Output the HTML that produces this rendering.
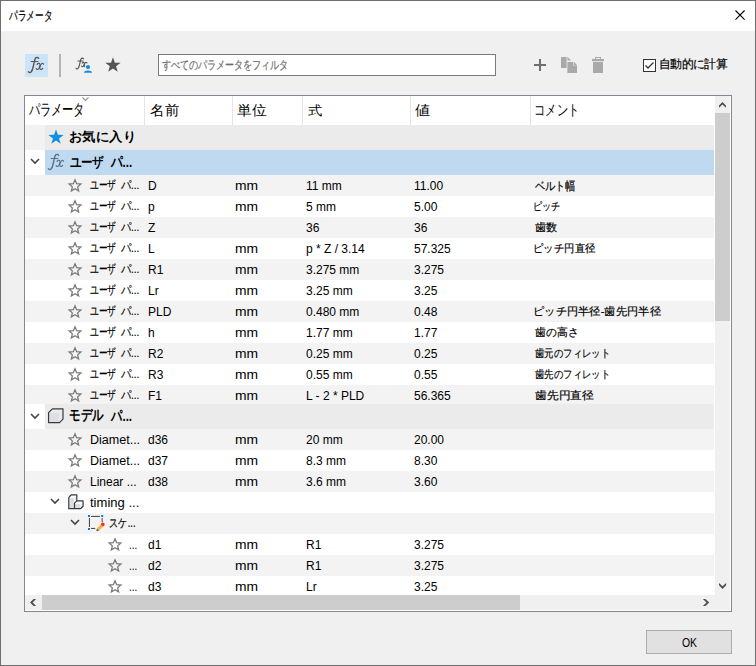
<!DOCTYPE html>
<html><head><meta charset="utf-8"><style>
*{box-sizing:border-box;margin:0;padding:0}
html,body{width:756px;height:666px;overflow:hidden;background:#f0f0f0}
body{position:relative;font-family:"Liberation Sans",sans-serif;color:#000;font-size:12px}
.a{position:absolute;white-space:nowrap}
.f{transform-origin:0 0}
.fxs path{stroke-width:1.65px}
#win{position:absolute;left:0;top:0;width:756px;height:666px;border:1px solid #6e6e6e;background:#f0f0f0}
#title{position:absolute;left:1px;top:1px;width:754px;height:30px;background:#fff}
#tbl{position:absolute;left:24px;top:95px;width:708px;height:517px;border:1px solid #828790;background:#fff;overflow:hidden}
.r{position:absolute;left:0;width:689px;height:21px;background:#fff}
.g{background:#f3f3f3}
.dv{position:absolute;top:0;width:1px;height:29px;background:#e5e5e5}
</style></head><body>
<div id="win"></div><div id="title"></div>
<div class="a f" style="left:9.10px;top:6.55px;font-size:12px;line-height:16px;transform:scale(0.7241,1.0818);-webkit-text-stroke-width:0.2px">パラメータ</div>
<svg class="a" style="left:732px;top:7px" width="16" height="16" viewBox="732 7 16 16"><path d="M735.5 10.5L744.6 19.6M744.6 10.5L735.5 19.6" stroke="#000" stroke-width="1.1"/></svg>
<div class="a" style="left:25px;top:54px;width:23px;height:23px;background:#cce4f7"></div>
<svg class="a" style="left:24px;top:53px" width="24.00" height="24.00" viewBox="0 0 24 24"><g fill="none" stroke="#555" stroke-linecap="round"><path d="M14.7 5.4 C14.3 4.3 12.6 3.9 11.6 5.0 C10.6 6.2 10.2 9.5 9.5 12.5 C8.9 15.3 8.3 17.6 7.2 18.8 C6.4 19.8 5.0 19.8 4.3 18.7" stroke-width="1.35"/><path d="M7.1 8.5 H13.9" stroke-width="1.1"/><path d="M13.1 11.4 C13.6 10.4 14.8 10.0 15.6 10.5 C16.2 10.9 16.0 12.5 15.6 14.0 C15.2 15.5 14.6 16.4 13.7 16.5 C13.0 16.6 12.4 16.2 12.2 15.5" stroke-width="1.15"/><path d="M19.6 11.2 C19.4 10.5 18.6 10.2 17.9 10.5 C17.0 10.9 16.3 12.3 16.0 13.6 C15.6 15.2 15.9 16.4 16.8 16.5 C17.6 16.6 18.3 16.0 18.7 15.4" stroke-width="1.15"/></g></svg>
<div class="a" style="left:59px;top:54px;width:2px;height:23px;background:#b4b4b4"></div>
<svg class="a fxs" style="left:73.25px;top:54.5px" width="17.04" height="17.04" viewBox="0 0 24 24"><g fill="none" stroke="#555" stroke-linecap="round"><path d="M14.7 5.4 C14.3 4.3 12.6 3.9 11.6 5.0 C10.6 6.2 10.2 9.5 9.5 12.5 C8.9 15.3 8.3 17.6 7.2 18.8 C6.4 19.8 5.0 19.8 4.3 18.7" stroke-width="1.35"/><path d="M7.1 8.5 H13.9" stroke-width="1.1"/><path d="M13.1 11.4 C13.6 10.4 14.8 10.0 15.6 10.5 C16.2 10.9 16.0 12.5 15.6 14.0 C15.2 15.5 14.6 16.4 13.7 16.5 C13.0 16.6 12.4 16.2 12.2 15.5" stroke-width="1.15"/><path d="M19.6 11.2 C19.4 10.5 18.6 10.2 17.9 10.5 C17.0 10.9 16.3 12.3 16.0 13.6 C15.6 15.2 15.9 16.4 16.8 16.5 C17.6 16.6 18.3 16.0 18.7 15.4" stroke-width="1.15"/></g></svg>
<svg class="a" style="left:82px;top:63px" width="12" height="12" viewBox="82 63 12 12"><circle cx="88" cy="67.1" r="2.9" fill="#f0f0f0"/><path d="M83 73.6 C83 68.6 93 68.6 93 73.6Z" fill="#f0f0f0"/><circle cx="88" cy="67.1" r="2.1" fill="#1a88e0"/><path d="M83.9 72.8 C83.9 69.6 92.1 69.6 92.1 72.8Z" fill="#1a88e0"/></svg>
<svg class="a" style="left:100px;top:52px" width="26" height="26" viewBox="100 52 26 26"><path d="M112.95 57.20L114.85 62.68L120.65 62.80L116.03 66.30L117.71 71.85L112.95 68.54L108.19 71.85L109.87 66.30L105.25 62.80L111.05 62.68Z" fill="#555"/></svg>
<div class="a" style="left:158px;top:54px;width:338px;height:22px;background:#fff;border:1px solid #7a7a7a"></div>
<div class="a f" style="left:161.90px;top:57.13px;font-size:12px;line-height:16px;transform:scale(0.7506,0.9909);color:#6d6d6d;-webkit-text-stroke-width:0.2px">すべてのパラメータをフィルタ</div>
<div class="a" style="left:534px;top:64px;width:12px;height:2px;background:#6e6e6e"></div>
<div class="a" style="left:539px;top:59px;width:2px;height:12px;background:#6e6e6e"></div>
<svg class="a" style="left:558px;top:54px" width="50" height="22" viewBox="558 54 50 22"><g fill="#a9a9a9"><path d="M561 57H566.6V68H561Z"/><path d="M567.4 56.8L571.2 60.6H567.4Z"/><path d="M567.4 62H573.2V65.6H577V73H567.4Z"/><path d="M573.8 61.8L577.2 65.2H573.8Z"/><path d="M595 57H601V59.2H600V58H596V59.2H595Z"/><path d="M592 59H604V61.2H592Z"/><path d="M593 62H603V73H593Z"/></g></svg>
<div class="a" style="left:643px;top:59px;width:13px;height:13px;border:1px solid #333;background:#fff"></div>
<svg class="a" style="left:643px;top:59px" width="13" height="13" viewBox="0 0 13 13"><path d="M2.5 6.5L5 9L10.5 3.5" stroke="#333" stroke-width="1.3" fill="none"/></svg>
<div class="a f" style="left:658.86px;top:57.48px;font-size:12px;line-height:16px;transform:scale(0.9437,0.9583);-webkit-text-stroke-width:0.2px">自動的に計算</div>
<div id="tbl">
<div class="a" style="left:0;top:0;width:690px;height:29px;background:#fff"></div>
<div class="dv" style="left:119px"></div>
<div class="dv" style="left:207px"></div>
<div class="dv" style="left:277px"></div>
<div class="dv" style="left:385px"></div>
<div class="dv" style="left:505px"></div>
<div class="a f" style="left:4.27px;top:-2.02px;font-size:15px;line-height:29px;transform:scale(0.7338,1.0462);">パラメータ</div>
<div class="a f" style="left:124.53px;top:0.26px;font-size:15px;line-height:29px;transform:scale(0.9714,0.9429);">名前</div>
<div class="a f" style="left:211.90px;top:0.26px;font-size:15px;line-height:29px;transform:scale(0.9964,0.9429);">単位</div>
<div class="a f" style="left:282.90px;top:0.77px;font-size:15px;line-height:29px;transform:scale(0.9667,0.8786);">式</div>
<div class="a f" style="left:390.10px;top:-0.33px;font-size:15px;line-height:29px;transform:scale(0.9929,0.9286);">値</div>
<div class="a f" style="left:509.49px;top:-1.00px;font-size:15px;line-height:29px;transform:scale(0.7537,1.0000);">コメント</div>
<svg class="a" style="left:55px;top:0px" width="12" height="8" viewBox="80 96 12 8"><path d="M82.3 97.4L85.4 100.4L88.5 97.4" stroke="#909090" stroke-width="1.15" fill="none"/></svg>
<div class="r" style="top:29px;height:25px;background:#f2f2f2"></div>
<div class="r" style="top:29px;left:20px;width:669px;height:25px;background:#ebebeb"></div>
<svg class="a" style="left:20px;top:31px" width="22" height="22" viewBox="45 127 22 22"><path d="M56.00 129.40L57.88 134.81L63.61 134.93L59.04 138.39L60.70 143.87L56.00 140.60L51.30 143.87L52.96 138.39L48.39 134.93L54.12 134.81Z" fill="#1190de"/></svg>
<div class="a f" style="left:44.44px;top:29.32px;font-size:14px;line-height:25px;transform:scale(0.9561,0.9357);font-weight:bold">お気に入り</div>
<div class="r" style="top:54px;height:25px;background:#fff"></div>
<div class="r" style="top:54px;left:20px;width:669px;height:25px;background:#bfd9f0"></div>
<svg class="a" style="left:5px;top:62px" width="10" height="7" viewBox="0 0 10 7"><path d="M1 1L5 5L9 1" stroke="#444" stroke-width="1.6" fill="none"/></svg>
<svg class="a" style="left:19px;top:54px" width="24.00" height="24.00" viewBox="0 0 24 24"><g fill="none" stroke="#587089" stroke-linecap="round"><path d="M14.7 5.4 C14.3 4.3 12.6 3.9 11.6 5.0 C10.6 6.2 10.2 9.5 9.5 12.5 C8.9 15.3 8.3 17.6 7.2 18.8 C6.4 19.8 5.0 19.8 4.3 18.7" stroke-width="1.35"/><path d="M7.1 8.5 H13.9" stroke-width="1.1"/><path d="M13.1 11.4 C13.6 10.4 14.8 10.0 15.6 10.5 C16.2 10.9 16.0 12.5 15.6 14.0 C15.2 15.5 14.6 16.4 13.7 16.5 C13.0 16.6 12.4 16.2 12.2 15.5" stroke-width="1.15"/><path d="M19.6 11.2 C19.4 10.5 18.6 10.2 17.9 10.5 C17.0 10.9 16.3 12.3 16.0 13.6 C15.6 15.2 15.9 16.4 16.8 16.5 C17.6 16.6 18.3 16.0 18.7 15.4" stroke-width="1.15"/></g></svg>
<div class="a f" style="left:45.40px;top:54.11px;font-size:14px;line-height:25px;transform:scale(0.8012,0.9731);font-weight:bold">ユーザ</div>
<div class="a f" style="left:85.50px;top:52.58px;font-size:14px;line-height:25px;transform:scale(0.8240,1.0538);font-weight:bold">パ...</div>
<div class="r g" style="top:79px;height:21px"></div>
<svg class="a" style="left:41px;top:80.6px" width="18" height="18" viewBox="66 176.6 18 18"><path d="M75.00 179.40L76.64 183.34L80.90 183.68L77.65 186.46L78.64 190.62L75.00 188.39L71.36 190.62L72.35 186.46L69.10 183.68L73.36 183.34Z" fill="none" stroke="#777" stroke-width="1.25" stroke-linejoin="miter"/></svg>
<div class="a f" style="left:65.40px;top:81.19px;font-size:12px;line-height:16px;transform:scale(0.7278,1.0042);-webkit-text-stroke-width:0.2px">ユーザ</div>
<div class="a f" style="left:95.90px;top:81.25px;font-size:12px;line-height:16px;transform:scale(0.8333,0.9750);-webkit-text-stroke-width:0.2px">パ...</div>
<div class="a" style="left:123px;top:82px;font-size:12px;line-height:16px;">D</div>
<div class="a f" style="left:210.14px;top:82.00px;font-size:12px;line-height:16px;transform:scale(1.1556,1.0000);">mm</div>
<div class="a" style="left:281px;top:82px;font-size:12px;line-height:16px;">11 mm</div>
<div class="a" style="left:389px;top:82px;font-size:12px;line-height:16px;">11.00</div>
<div class="a f" style="left:509.50px;top:81.63px;font-size:12px;line-height:16px;transform:scale(0.8404,0.9833);-webkit-text-stroke-width:0.2px">ベルト幅</div>
<div class="r" style="top:100px;height:21px"></div>
<svg class="a" style="left:41px;top:101.6px" width="18" height="18" viewBox="66 197.6 18 18"><path d="M75.00 200.40L76.64 204.34L80.90 204.68L77.65 207.46L78.64 211.62L75.00 209.39L71.36 211.62L72.35 207.46L69.10 204.68L73.36 204.34Z" fill="none" stroke="#777" stroke-width="1.25" stroke-linejoin="miter"/></svg>
<div class="a f" style="left:65.40px;top:102.19px;font-size:12px;line-height:16px;transform:scale(0.7278,1.0042);-webkit-text-stroke-width:0.2px">ユーザ</div>
<div class="a f" style="left:95.90px;top:102.25px;font-size:12px;line-height:16px;transform:scale(0.8333,0.9750);-webkit-text-stroke-width:0.2px">パ...</div>
<div class="a" style="left:123px;top:103px;font-size:12px;line-height:16px;">p</div>
<div class="a f" style="left:210.14px;top:103.00px;font-size:12px;line-height:16px;transform:scale(1.1556,1.0000);">mm</div>
<div class="a" style="left:281px;top:103px;font-size:12px;line-height:16px;">5 mm</div>
<div class="a" style="left:389px;top:103px;font-size:12px;line-height:16px;">5.00</div>
<div class="a f" style="left:507.97px;top:102.75px;font-size:12px;line-height:16px;transform:scale(0.7636,0.9250);-webkit-text-stroke-width:0.2px">ピッチ</div>
<div class="r g" style="top:121px;height:21px"></div>
<svg class="a" style="left:41px;top:122.6px" width="18" height="18" viewBox="66 218.6 18 18"><path d="M75.00 221.40L76.64 225.34L80.90 225.68L77.65 228.46L78.64 232.62L75.00 230.39L71.36 232.62L72.35 228.46L69.10 225.68L73.36 225.34Z" fill="none" stroke="#777" stroke-width="1.25" stroke-linejoin="miter"/></svg>
<div class="a f" style="left:65.40px;top:123.19px;font-size:12px;line-height:16px;transform:scale(0.7278,1.0042);-webkit-text-stroke-width:0.2px">ユーザ</div>
<div class="a f" style="left:95.90px;top:123.25px;font-size:12px;line-height:16px;transform:scale(0.8333,0.9750);-webkit-text-stroke-width:0.2px">パ...</div>
<div class="a" style="left:123px;top:124px;font-size:12px;line-height:16px;">Z</div>
<div class="a" style="left:281px;top:124px;font-size:12px;line-height:16px;">36</div>
<div class="a" style="left:389px;top:124px;font-size:12px;line-height:16px;">36</div>
<div class="a f" style="left:509.50px;top:123.75px;font-size:12px;line-height:16px;transform:scale(0.9375,0.9250);-webkit-text-stroke-width:0.2px">歯数</div>
<div class="r" style="top:142px;height:21px"></div>
<svg class="a" style="left:41px;top:143.6px" width="18" height="18" viewBox="66 239.6 18 18"><path d="M75.00 242.40L76.64 246.34L80.90 246.68L77.65 249.46L78.64 253.62L75.00 251.39L71.36 253.62L72.35 249.46L69.10 246.68L73.36 246.34Z" fill="none" stroke="#777" stroke-width="1.25" stroke-linejoin="miter"/></svg>
<div class="a f" style="left:65.40px;top:144.19px;font-size:12px;line-height:16px;transform:scale(0.7278,1.0042);-webkit-text-stroke-width:0.2px">ユーザ</div>
<div class="a f" style="left:95.90px;top:144.25px;font-size:12px;line-height:16px;transform:scale(0.8333,0.9750);-webkit-text-stroke-width:0.2px">パ...</div>
<div class="a" style="left:123px;top:145px;font-size:12px;line-height:16px;">L</div>
<div class="a f" style="left:210.14px;top:145.00px;font-size:12px;line-height:16px;transform:scale(1.1556,1.0000);">mm</div>
<div class="a" style="left:281px;top:145px;font-size:12px;line-height:16px;">p * Z / 3.14</div>
<div class="a" style="left:389px;top:145px;font-size:12px;line-height:16px;">57.325</div>
<div class="a f" style="left:507.76px;top:144.75px;font-size:12px;line-height:16px;transform:scale(0.8700,0.9250);-webkit-text-stroke-width:0.2px">ピッチ円直径</div>
<div class="r g" style="top:163px;height:21px"></div>
<svg class="a" style="left:41px;top:164.60000000000002px" width="18" height="18" viewBox="66 260.6 18 18"><path d="M75.00 263.40L76.64 267.34L80.90 267.68L77.65 270.46L78.64 274.62L75.00 272.39L71.36 274.62L72.35 270.46L69.10 267.68L73.36 267.34Z" fill="none" stroke="#777" stroke-width="1.25" stroke-linejoin="miter"/></svg>
<div class="a f" style="left:65.40px;top:165.19px;font-size:12px;line-height:16px;transform:scale(0.7278,1.0042);-webkit-text-stroke-width:0.2px">ユーザ</div>
<div class="a f" style="left:95.90px;top:165.25px;font-size:12px;line-height:16px;transform:scale(0.8333,0.9750);-webkit-text-stroke-width:0.2px">パ...</div>
<div class="a" style="left:123px;top:166px;font-size:12px;line-height:16px;">R1</div>
<div class="a f" style="left:210.14px;top:166.00px;font-size:12px;line-height:16px;transform:scale(1.1556,1.0000);">mm</div>
<div class="a" style="left:281px;top:166px;font-size:12px;line-height:16px;">3.275 mm</div>
<div class="a" style="left:389px;top:166px;font-size:12px;line-height:16px;">3.275</div>
<div class="r" style="top:184px;height:21px"></div>
<svg class="a" style="left:41px;top:185.60000000000002px" width="18" height="18" viewBox="66 281.6 18 18"><path d="M75.00 284.40L76.64 288.34L80.90 288.68L77.65 291.46L78.64 295.62L75.00 293.39L71.36 295.62L72.35 291.46L69.10 288.68L73.36 288.34Z" fill="none" stroke="#777" stroke-width="1.25" stroke-linejoin="miter"/></svg>
<div class="a f" style="left:65.40px;top:186.19px;font-size:12px;line-height:16px;transform:scale(0.7278,1.0042);-webkit-text-stroke-width:0.2px">ユーザ</div>
<div class="a f" style="left:95.90px;top:186.25px;font-size:12px;line-height:16px;transform:scale(0.8333,0.9750);-webkit-text-stroke-width:0.2px">パ...</div>
<div class="a" style="left:123px;top:187px;font-size:12px;line-height:16px;">Lr</div>
<div class="a f" style="left:210.14px;top:187.00px;font-size:12px;line-height:16px;transform:scale(1.1556,1.0000);">mm</div>
<div class="a" style="left:281px;top:187px;font-size:12px;line-height:16px;">3.25 mm</div>
<div class="a" style="left:389px;top:187px;font-size:12px;line-height:16px;">3.25</div>
<div class="r g" style="top:205px;height:21px"></div>
<svg class="a" style="left:41px;top:206.60000000000002px" width="18" height="18" viewBox="66 302.6 18 18"><path d="M75.00 305.40L76.64 309.34L80.90 309.68L77.65 312.46L78.64 316.62L75.00 314.39L71.36 316.62L72.35 312.46L69.10 309.68L73.36 309.34Z" fill="none" stroke="#777" stroke-width="1.25" stroke-linejoin="miter"/></svg>
<div class="a f" style="left:65.40px;top:207.19px;font-size:12px;line-height:16px;transform:scale(0.7278,1.0042);-webkit-text-stroke-width:0.2px">ユーザ</div>
<div class="a f" style="left:95.90px;top:207.25px;font-size:12px;line-height:16px;transform:scale(0.8333,0.9750);-webkit-text-stroke-width:0.2px">パ...</div>
<div class="a" style="left:123px;top:208px;font-size:12px;line-height:16px;">PLD</div>
<div class="a f" style="left:210.14px;top:208.00px;font-size:12px;line-height:16px;transform:scale(1.1556,1.0000);">mm</div>
<div class="a" style="left:281px;top:208px;font-size:12px;line-height:16px;">0.480 mm</div>
<div class="a" style="left:389px;top:208px;font-size:12px;line-height:16px;">0.48</div>
<div class="a f" style="left:507.62px;top:207.75px;font-size:12px;line-height:16px;transform:scale(0.9403,0.9250);-webkit-text-stroke-width:0.2px">ピッチ円半径-歯先円半径</div>
<div class="r" style="top:226px;height:21px"></div>
<svg class="a" style="left:41px;top:227.60000000000002px" width="18" height="18" viewBox="66 323.6 18 18"><path d="M75.00 326.40L76.64 330.34L80.90 330.68L77.65 333.46L78.64 337.62L75.00 335.39L71.36 337.62L72.35 333.46L69.10 330.68L73.36 330.34Z" fill="none" stroke="#777" stroke-width="1.25" stroke-linejoin="miter"/></svg>
<div class="a f" style="left:65.40px;top:228.19px;font-size:12px;line-height:16px;transform:scale(0.7278,1.0042);-webkit-text-stroke-width:0.2px">ユーザ</div>
<div class="a f" style="left:95.90px;top:228.25px;font-size:12px;line-height:16px;transform:scale(0.8333,0.9750);-webkit-text-stroke-width:0.2px">パ...</div>
<div class="a" style="left:123px;top:229px;font-size:12px;line-height:16px;">h</div>
<div class="a f" style="left:210.14px;top:229.00px;font-size:12px;line-height:16px;transform:scale(1.1556,1.0000);">mm</div>
<div class="a" style="left:281px;top:229px;font-size:12px;line-height:16px;">1.77 mm</div>
<div class="a" style="left:389px;top:229px;font-size:12px;line-height:16px;">1.77</div>
<div class="a f" style="left:509.50px;top:228.75px;font-size:12px;line-height:16px;transform:scale(0.9065,0.9250);-webkit-text-stroke-width:0.2px">歯の高さ</div>
<div class="r g" style="top:247px;height:21px"></div>
<svg class="a" style="left:41px;top:248.60000000000002px" width="18" height="18" viewBox="66 344.6 18 18"><path d="M75.00 347.40L76.64 351.34L80.90 351.68L77.65 354.46L78.64 358.62L75.00 356.39L71.36 358.62L72.35 354.46L69.10 351.68L73.36 351.34Z" fill="none" stroke="#777" stroke-width="1.25" stroke-linejoin="miter"/></svg>
<div class="a f" style="left:65.40px;top:249.19px;font-size:12px;line-height:16px;transform:scale(0.7278,1.0042);-webkit-text-stroke-width:0.2px">ユーザ</div>
<div class="a f" style="left:95.90px;top:249.25px;font-size:12px;line-height:16px;transform:scale(0.8333,0.9750);-webkit-text-stroke-width:0.2px">パ...</div>
<div class="a" style="left:123px;top:250px;font-size:12px;line-height:16px;">R2</div>
<div class="a f" style="left:210.14px;top:250.00px;font-size:12px;line-height:16px;transform:scale(1.1556,1.0000);">mm</div>
<div class="a" style="left:281px;top:250px;font-size:12px;line-height:16px;">0.25 mm</div>
<div class="a" style="left:389px;top:250px;font-size:12px;line-height:16px;">0.25</div>
<div class="a f" style="left:509.50px;top:249.75px;font-size:12px;line-height:16px;transform:scale(0.7828,0.9250);-webkit-text-stroke-width:0.2px">歯元のフィレット</div>
<div class="r" style="top:268px;height:21px"></div>
<svg class="a" style="left:41px;top:269.6px" width="18" height="18" viewBox="66 365.6 18 18"><path d="M75.00 368.40L76.64 372.34L80.90 372.68L77.65 375.46L78.64 379.62L75.00 377.39L71.36 379.62L72.35 375.46L69.10 372.68L73.36 372.34Z" fill="none" stroke="#777" stroke-width="1.25" stroke-linejoin="miter"/></svg>
<div class="a f" style="left:65.40px;top:270.19px;font-size:12px;line-height:16px;transform:scale(0.7278,1.0042);-webkit-text-stroke-width:0.2px">ユーザ</div>
<div class="a f" style="left:95.90px;top:270.25px;font-size:12px;line-height:16px;transform:scale(0.8333,0.9750);-webkit-text-stroke-width:0.2px">パ...</div>
<div class="a" style="left:123px;top:271px;font-size:12px;line-height:16px;">R3</div>
<div class="a f" style="left:210.14px;top:271.00px;font-size:12px;line-height:16px;transform:scale(1.1556,1.0000);">mm</div>
<div class="a" style="left:281px;top:271px;font-size:12px;line-height:16px;">0.55 mm</div>
<div class="a" style="left:389px;top:271px;font-size:12px;line-height:16px;">0.55</div>
<div class="a f" style="left:509.50px;top:270.75px;font-size:12px;line-height:16px;transform:scale(0.7828,0.9250);-webkit-text-stroke-width:0.2px">歯先のフィレット</div>
<div class="r g" style="top:289px;height:19px"></div>
<svg class="a" style="left:41px;top:290.6px" width="18" height="18" viewBox="66 386.6 18 18"><path d="M75.00 389.40L76.64 393.34L80.90 393.68L77.65 396.46L78.64 400.62L75.00 398.39L71.36 400.62L72.35 396.46L69.10 393.68L73.36 393.34Z" fill="none" stroke="#777" stroke-width="1.25" stroke-linejoin="miter"/></svg>
<div class="a f" style="left:65.40px;top:291.19px;font-size:12px;line-height:16px;transform:scale(0.7278,1.0042);-webkit-text-stroke-width:0.2px">ユーザ</div>
<div class="a f" style="left:95.90px;top:291.25px;font-size:12px;line-height:16px;transform:scale(0.8333,0.9750);-webkit-text-stroke-width:0.2px">パ...</div>
<div class="a" style="left:123px;top:292px;font-size:12px;line-height:16px;">F1</div>
<div class="a f" style="left:210.14px;top:292.00px;font-size:12px;line-height:16px;transform:scale(1.1556,1.0000);">mm</div>
<div class="a" style="left:281px;top:292px;font-size:12px;line-height:16px;">L - 2 * PLD</div>
<div class="a" style="left:389px;top:292px;font-size:12px;line-height:16px;">56.365</div>
<div class="a f" style="left:509.50px;top:291.75px;font-size:12px;line-height:16px;transform:scale(0.9833,0.9250);-webkit-text-stroke-width:0.2px">歯先円直径</div>
<div class="r" style="top:308px;height:25px;background:#fff"></div>
<div class="r" style="top:308px;left:20px;width:669px;height:25px;background:#ebebeb"></div>
<svg class="a" style="left:5px;top:317px" width="10" height="7" viewBox="0 0 10 7"><path d="M1 1L5 5L9 1" stroke="#444" stroke-width="1.6" fill="none"/></svg>
<svg class="a" style="left:21px;top:310px" width="20" height="20" viewBox="46 406 20 20"><path d="M49.8 413H58.8V422H49.8Z" fill="#dcdfe5"/><path d="M59.6 413L62.4 410.2V418.8L59.6 421.6Z" fill="#e6e8ec"/><path d="M48.6 412.6L52.4 408.8H63.0V419.1L59.5 422.6H48.6Z" fill="none" stroke="#3a3a3a" stroke-width="1.2" stroke-linejoin="round"/></svg>
<div class="a f" style="left:44.11px;top:305.25px;font-size:14px;line-height:25px;transform:scale(0.8378,1.1000);font-weight:bold">モデル</div>
<div class="a f" style="left:85.90px;top:305.60px;font-size:14px;line-height:25px;transform:scale(0.8200,1.1000);font-weight:bold">パ...</div>
<div class="r g" style="top:333px;height:21px"></div>
<svg class="a" style="left:41px;top:334.6px" width="18" height="18" viewBox="66 430.6 18 18"><path d="M75.00 433.40L76.64 437.34L80.90 437.68L77.65 440.46L78.64 444.62L75.00 442.39L71.36 444.62L72.35 440.46L69.10 437.68L73.36 437.34Z" fill="none" stroke="#777" stroke-width="1.25" stroke-linejoin="miter"/></svg>
<div class="a f" style="left:64.96px;top:336.00px;font-size:12px;line-height:16px;transform:scale(1.0435,1.0000);">Diamet...</div>
<div class="a" style="left:123px;top:336px;font-size:12px;line-height:16px;">d36</div>
<div class="a f" style="left:210.14px;top:336.00px;font-size:12px;line-height:16px;transform:scale(1.1556,1.0000);">mm</div>
<div class="a" style="left:281px;top:336px;font-size:12px;line-height:16px;">20 mm</div>
<div class="a" style="left:389px;top:336px;font-size:12px;line-height:16px;">20.00</div>
<div class="r" style="top:354px;height:21px"></div>
<svg class="a" style="left:41px;top:355.6px" width="18" height="18" viewBox="66 451.6 18 18"><path d="M75.00 454.40L76.64 458.34L80.90 458.68L77.65 461.46L78.64 465.62L75.00 463.39L71.36 465.62L72.35 461.46L69.10 458.68L73.36 458.34Z" fill="none" stroke="#777" stroke-width="1.25" stroke-linejoin="miter"/></svg>
<div class="a f" style="left:64.96px;top:357.00px;font-size:12px;line-height:16px;transform:scale(1.0435,1.0000);">Diamet...</div>
<div class="a" style="left:123px;top:357px;font-size:12px;line-height:16px;">d37</div>
<div class="a f" style="left:210.14px;top:357.00px;font-size:12px;line-height:16px;transform:scale(1.1556,1.0000);">mm</div>
<div class="a" style="left:281px;top:357px;font-size:12px;line-height:16px;">8.3 mm</div>
<div class="a" style="left:389px;top:357px;font-size:12px;line-height:16px;">8.30</div>
<div class="r g" style="top:375px;height:21px"></div>
<svg class="a" style="left:41px;top:376.6px" width="18" height="18" viewBox="66 472.6 18 18"><path d="M75.00 475.40L76.64 479.34L80.90 479.68L77.65 482.46L78.64 486.62L75.00 484.39L71.36 486.62L72.35 482.46L69.10 479.68L73.36 479.34Z" fill="none" stroke="#777" stroke-width="1.25" stroke-linejoin="miter"/></svg>
<div class="a f" style="left:65.00px;top:378.00px;font-size:12px;line-height:16px;transform:scale(1.0000,1.0000);">Linear ...</div>
<div class="a" style="left:123px;top:378px;font-size:12px;line-height:16px;">d38</div>
<div class="a f" style="left:210.14px;top:378.00px;font-size:12px;line-height:16px;transform:scale(1.1556,1.0000);">mm</div>
<div class="a" style="left:281px;top:378px;font-size:12px;line-height:16px;">3.6 mm</div>
<div class="a" style="left:389px;top:378px;font-size:12px;line-height:16px;">3.60</div>
<div class="r" style="top:396px"></div>
<svg class="a" style="left:25px;top:402px" width="10" height="7" viewBox="0 0 10 7"><path d="M1 1L5 5L9 1" stroke="#444" stroke-width="1.6" fill="none"/></svg>
<svg class="a" style="left:41px;top:396px" width="20" height="20" viewBox="66 492 20 20"><g fill="#dcdfe5"><path d="M69.4 497.8H74.0V508.6H69.4Z"/><path d="M74.9 503.8H80.4V508.6H74.9Z"/></g><g fill="#e8eaee"><path d="M74.8 497.6L76.4 496V500.4L74.8 502Z"/><path d="M80.9 503.6L82.6 501.9V505.9L80.9 507.6Z"/></g><path d="M68.8 497.4L71.5 494.8H76.8V500.9H83.1V506.2L80.5 508.7H68.8Z M76.8 500.9L74.5 503.2V508.7" fill="none" stroke="#3a3a3a" stroke-width="1.2" stroke-linejoin="round"/></svg>
<div class="a f" style="left:65.20px;top:399.00px;font-size:12px;line-height:16px;transform:scale(1.0864,1.0000);">timing ...</div>
<div class="r g" style="top:417px"></div>
<svg class="a" style="left:45px;top:423px" width="10" height="7" viewBox="0 0 10 7"><path d="M1 1L5 5L9 1" stroke="#444" stroke-width="1.6" fill="none"/></svg>
<svg class="a" style="left:60px;top:416px" width="22" height="22" viewBox="85 512 22 22"><g fill="#0a78e0"><rect x="88" y="515" width="2" height="2"/><rect x="101.2" y="515" width="2" height="2"/><rect x="88" y="528" width="2" height="2"/></g><g fill="#505050"><rect x="91" y="515.9" width="9" height="1.1"/><rect x="88.9" y="518" width="1.1" height="9"/><rect x="101.6" y="518" width="1.1" height="4.2"/><rect x="91" y="527.9" width="4.2" height="1.1"/><path d="M96.3 531.2L97.1 528.4L99.2 530.4Z"/></g><path d="M97.0 528.3L99.3 530.5L103.0 526.8L100.7 524.6Z" fill="#f7b538"/><path d="M100.7 524.6L103.0 526.8L104.2 525.6C104.9 524.9 104.9 523.9 104.2 523.2L103.9 522.9C103.2 522.2 102.2 522.2 101.5 522.9Z" fill="#ee3030"/></svg>
<div class="a f" style="left:84.42px;top:419.48px;font-size:12px;line-height:16px;transform:scale(0.7812,1.0400);-webkit-text-stroke-width:0.2px">スケ...</div>
<div class="r" style="top:438px;height:21px"></div>
<svg class="a" style="left:81px;top:439.6px" width="18" height="18" viewBox="106 535.6 18 18"><path d="M115.00 538.40L116.64 542.34L120.90 542.68L117.65 545.46L118.64 549.62L115.00 547.39L111.36 549.62L112.35 545.46L109.10 542.68L113.36 542.34Z" fill="none" stroke="#777" stroke-width="1.25" stroke-linejoin="miter"/></svg>
<div class="a f" style="left:104.19px;top:441.00px;font-size:12px;line-height:16px;transform:scale(0.8125,1.0000);">...</div>
<div class="a" style="left:123px;top:441px;font-size:12px;line-height:16px;">d1</div>
<div class="a f" style="left:210.14px;top:441.00px;font-size:12px;line-height:16px;transform:scale(1.1556,1.0000);">mm</div>
<div class="a" style="left:281px;top:441px;font-size:12px;line-height:16px;">R1</div>
<div class="a" style="left:389px;top:441px;font-size:12px;line-height:16px;">3.275</div>
<div class="r g" style="top:459px;height:21px"></div>
<svg class="a" style="left:81px;top:460.6px" width="18" height="18" viewBox="106 556.6 18 18"><path d="M115.00 559.40L116.64 563.34L120.90 563.68L117.65 566.46L118.64 570.62L115.00 568.39L111.36 570.62L112.35 566.46L109.10 563.68L113.36 563.34Z" fill="none" stroke="#777" stroke-width="1.25" stroke-linejoin="miter"/></svg>
<div class="a f" style="left:104.19px;top:462.00px;font-size:12px;line-height:16px;transform:scale(0.8125,1.0000);">...</div>
<div class="a" style="left:123px;top:462px;font-size:12px;line-height:16px;">d2</div>
<div class="a f" style="left:210.14px;top:462.00px;font-size:12px;line-height:16px;transform:scale(1.1556,1.0000);">mm</div>
<div class="a" style="left:281px;top:462px;font-size:12px;line-height:16px;">R1</div>
<div class="a" style="left:389px;top:462px;font-size:12px;line-height:16px;">3.275</div>
<div class="r" style="top:480px;height:21px"></div>
<svg class="a" style="left:81px;top:481.6px" width="18" height="18" viewBox="106 577.6 18 18"><path d="M115.00 580.40L116.64 584.34L120.90 584.68L117.65 587.46L118.64 591.62L115.00 589.39L111.36 591.62L112.35 587.46L109.10 584.68L113.36 584.34Z" fill="none" stroke="#777" stroke-width="1.25" stroke-linejoin="miter"/></svg>
<div class="a f" style="left:104.19px;top:483.00px;font-size:12px;line-height:16px;transform:scale(0.8125,1.0000);">...</div>
<div class="a" style="left:123px;top:483px;font-size:12px;line-height:16px;">d3</div>
<div class="a f" style="left:210.14px;top:483.00px;font-size:12px;line-height:16px;transform:scale(1.1556,1.0000);">mm</div>
<div class="a" style="left:281px;top:483px;font-size:12px;line-height:16px;">Lr</div>
<div class="a" style="left:389px;top:483px;font-size:12px;line-height:16px;">3.25</div>
<div class="a" style="left:690px;top:0;width:15px;height:499px;background:#f0f0f0"></div>
<div class="a" style="left:690px;top:17px;width:15px;height:208px;background:#cdcdcd"></div>
<div class="a" style="left:0;top:499px;width:705px;height:15px;background:#f0f0f0"></div>
<div class="a" style="left:17px;top:499px;width:478px;height:15px;background:#cdcdcd"></div>
<svg class="a" style="left:0;top:0" width="706" height="515" viewBox="25 96 706 515"><g fill="#4d4d4d"><path d="M722.45 102.1L725.9 105.4V107.8L722.45 104.6L719.0 107.8V105.4Z"/><path d="M719.0 582.9V585.3L722.55 588.9L726.1 585.3V582.9L722.55 586.3Z"/><path d="M36.1 598.9H33.6L30.0 602.5L33.6 606.1H36.1L32.6 602.5Z"/><path d="M702.9 598.9H705.4L709.2 602.4L705.4 605.9H702.9L706.5 602.4Z"/></g></svg>
</div>
<div class="a" style="left:646px;top:630px;width:86px;height:24px;background:#e1e1e1;border:1px solid #adadad"></div>
<div class="a f" style="left:681.53px;top:634.10px;font-size:12px;line-height:16px;transform:scale(0.8687,1.1000);">OK</div>
</body></html>
